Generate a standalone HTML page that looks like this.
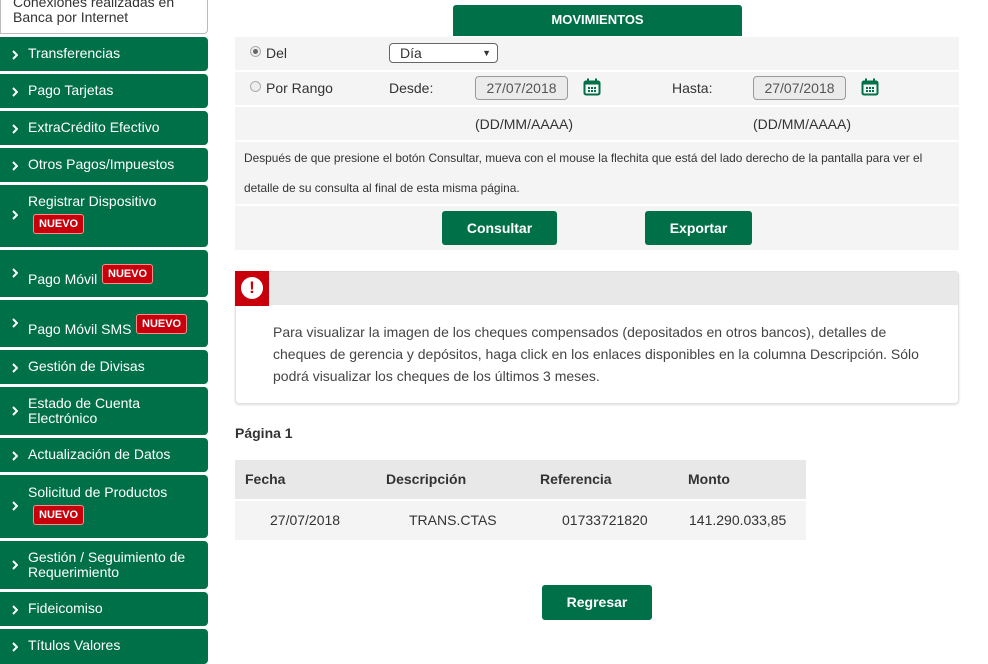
<!DOCTYPE html>
<html><head><meta charset="utf-8"><style>
*{margin:0;padding:0;box-sizing:border-box}
body{width:988px;height:664px;overflow:hidden;background:#fff;font-family:"Liberation Sans",Arial,sans-serif;position:relative;color:#333}
.a{position:absolute}
.nav{position:absolute;left:0;width:208px;background:#007049;color:#fff;border-radius:0 4px 4px 0;font-size:14px}
.nav .t{position:absolute;left:28px;line-height:15px}
.nav .c{position:absolute;left:12px;width:6px;height:10px}
.badge{display:inline-block;background:#c8000b;color:#fff;font-size:11px;font-weight:bold;padding:3px 5px;border-radius:3px;border:1px solid #ff8a8a;line-height:12px}
.row{position:absolute;left:235px;width:724px;background:#f4f4f4}
.btn{position:absolute;background:#007049;color:#fff;font-weight:bold;font-size:14px;text-align:center;border-radius:3px}
.inp{position:absolute;width:93px;height:24px;border:1px solid #999;border-radius:4px;background:#ebebeb;font-size:14px;color:#555;text-align:center;line-height:22px}
.cal{position:absolute;width:18px;height:18px}
</style></head><body>
<svg width="0" height="0" style="position:absolute"><defs><symbol id="ch" viewBox="0 0 6 10"><polyline points="1,1 5,5 1,9" fill="none" stroke="#fff" stroke-width="2"/></symbol></defs></svg>
<div class="a" style="left:0;top:-4px;width:208px;height:38px;border:1px solid #bbb;border-radius:0 0 4px 0;font-size:14px;line-height:15px;padding:0 0 0 12px;color:#333"><div style="margin-top:-2px">Conexiones realizadas en</div><div>Banca por Internet</div></div>

<div class="nav" style="top:37px;height:34px"><svg class="c" style="top:13px"><use href="#ch"/></svg><span class="t" style="top:9px">Transferencias</span></div>
<div class="nav" style="top:74px;height:34px"><svg class="c" style="top:13px"><use href="#ch"/></svg><span class="t" style="top:9px">Pago Tarjetas</span></div>
<div class="nav" style="top:111px;height:34px"><svg class="c" style="top:13px"><use href="#ch"/></svg><span class="t" style="top:9px">ExtraCrédito Efectivo</span></div>
<div class="nav" style="top:148px;height:34px"><svg class="c" style="top:13px"><use href="#ch"/></svg><span class="t" style="top:9px">Otros Pagos/Impuestos</span></div>
<div class="nav" style="top:185px;height:62px"><svg class="c" style="top:25px"><use href="#ch"/></svg><span class="t" style="top:9px">Registrar Dispositivo</span><span class="badge a" style="left:33px;top:29px">NUEVO</span></div>
<div class="nav" style="top:250px;height:47px"><svg class="c" style="top:18px"><use href="#ch"/></svg><span class="t" style="top:22px">Pago Móvil</span><span class="badge a" style="left:102px;top:14px">NUEVO</span></div>
<div class="nav" style="top:300px;height:47px"><svg class="c" style="top:18px"><use href="#ch"/></svg><span class="t" style="top:22px">Pago Móvil SMS</span><span class="badge a" style="left:136px;top:14px">NUEVO</span></div>
<div class="nav" style="top:350px;height:34px"><svg class="c" style="top:13px"><use href="#ch"/></svg><span class="t" style="top:9px">Gestión de Divisas</span></div>
<div class="nav" style="top:387px;height:48px"><svg class="c" style="top:19px"><use href="#ch"/></svg><span class="t" style="top:9px">Estado de Cuenta<br>Electrónico</span></div>
<div class="nav" style="top:438px;height:34px"><svg class="c" style="top:13px"><use href="#ch"/></svg><span class="t" style="top:9px">Actualización de Datos</span></div>
<div class="nav" style="top:475px;height:63px"><svg class="c" style="top:26px"><use href="#ch"/></svg><span class="t" style="top:10px">Solicitud de Productos</span><span class="badge a" style="left:33px;top:30px">NUEVO</span></div>
<div class="nav" style="top:541px;height:48px"><svg class="c" style="top:19px"><use href="#ch"/></svg><span class="t" style="top:9px">Gestión / Seguimiento de<br>Requerimiento</span></div>
<div class="nav" style="top:592px;height:34px"><svg class="c" style="top:13px"><use href="#ch"/></svg><span class="t" style="top:9px">Fideicomiso</span></div>
<div class="nav" style="top:629px;height:35px"><svg class="c" style="top:13px"><use href="#ch"/></svg><span class="t" style="top:9px">Títulos Valores</span></div>

<div class="a" style="left:453px;top:5px;width:289px;height:31px;background:#007049;color:#fff;font-weight:bold;font-size:13px;text-align:center;line-height:29px;border-radius:3px 3px 0 0">MOVIMIENTOS</div>

<div class="row" style="top:37px;height:33px"></div>
<div class="row" style="top:72px;height:33px"></div>
<div class="row" style="top:107px;height:33px"></div>
<div class="row" style="top:142px;height:62px"></div>
<div class="row" style="top:206px;height:44px"></div>

<div class="a" style="left:250px;top:46px;width:11px;height:11px;border-radius:50%;border:1px solid #aaa;background:#eee"><div style="margin:2px;width:5px;height:5px;border-radius:50%;background:#666"></div></div>
<div class="a" style="left:266px;top:45px;font-size:14px">Del</div>
<div class="a" style="left:389px;top:43px;width:109px;height:20px;border:1px solid #666;border-radius:4px;background:#fff;font-size:14px;padding-left:10px;line-height:18px">Día<span style="position:absolute;right:6px;font-size:9px">▼</span></div>

<div class="a" style="left:250px;top:81px;width:11px;height:11px;border-radius:50%;border:1px solid #aaa;background:#eee"></div>
<div class="a" style="left:266px;top:80px;font-size:14px">Por Rango</div>
<div class="a" style="left:389px;top:80px;font-size:14px">Desde:</div>
<div class="inp" style="left:475px;top:76px">27/07/2018</div>
<svg class="cal" style="left:583px;top:78px" viewBox="0 0 18 18"><rect x="1.5" y="3.5" width="15" height="13" rx="1.5" fill="none" stroke="#007049" stroke-width="2"/><rect x="1.5" y="3.5" width="15" height="3" fill="#007049"/><rect x="4" y="0.5" width="2" height="4" fill="#007049"/><rect x="12" y="0.5" width="2" height="4" fill="#007049"/><g fill="#007049"><rect x="5" y="9" width="2" height="2"/><rect x="8" y="9" width="2" height="2"/><rect x="11" y="9" width="2" height="2"/><rect x="5" y="12" width="2" height="2"/><rect x="8" y="12" width="2" height="2"/><rect x="11" y="12" width="2" height="2"/></g></svg>
<div class="a" style="left:672px;top:80px;font-size:14px">Hasta:</div>
<div class="inp" style="left:753px;top:76px">27/07/2018</div>
<svg class="cal" style="left:861px;top:78px" viewBox="0 0 18 18"><rect x="1.5" y="3.5" width="15" height="13" rx="1.5" fill="none" stroke="#007049" stroke-width="2"/><rect x="1.5" y="3.5" width="15" height="3" fill="#007049"/><rect x="4" y="0.5" width="2" height="4" fill="#007049"/><rect x="12" y="0.5" width="2" height="4" fill="#007049"/><g fill="#007049"><rect x="5" y="9" width="2" height="2"/><rect x="8" y="9" width="2" height="2"/><rect x="11" y="9" width="2" height="2"/><rect x="5" y="12" width="2" height="2"/><rect x="8" y="12" width="2" height="2"/><rect x="11" y="12" width="2" height="2"/></g></svg>

<div class="a" style="left:475px;top:116px;font-size:14px">(DD/MM/AAAA)</div>
<div class="a" style="left:753px;top:116px;font-size:14px">(DD/MM/AAAA)</div>

<div class="a" style="left:244px;top:143px;font-size:11.9px;line-height:30px;width:710px;color:#333">Después de que presione el botón Consultar, mueva con el mouse la flechita que está del lado derecho de la pantalla para ver el<br>detalle de su consulta al final de esta misma página.</div>

<div class="btn" style="left:442px;top:211px;width:115px;height:34px;line-height:34px">Consultar</div>
<div class="btn" style="left:645px;top:211px;width:107px;height:34px;line-height:34px">Exportar</div>

<div class="a" style="left:235px;top:271px;width:724px;height:133px;border:1px solid #e2e2e2;border-radius:4px;background:#fff;box-shadow:0 1px 2px #ddd"></div>
<div class="a" style="left:236px;top:272px;width:722px;height:33px;background:#e8e8e8"></div>
<div class="a" style="left:235px;top:271px;width:34px;height:35px;background:#c8000b"><div style="position:absolute;left:6px;top:6px;width:22px;height:22px;border-radius:50%;background:#fff;color:#c8000b;font-weight:bold;font-size:17px;text-align:center;line-height:22px">!</div></div>
<div class="a" style="left:273px;top:321px;font-size:14px;line-height:22px;width:660px;color:#444">Para visualizar la imagen de los cheques compensados (depositados en otros bancos), detalles de cheques de gerencia y depósitos, haga click en los enlaces disponibles en la columna Descripción. Sólo podrá visualizar los cheques de los últimos 3 meses.</div>

<div class="a" style="left:235px;top:425px;font-size:14px;font-weight:bold">Página 1</div>

<div class="a" style="left:235px;top:460px;width:571px;height:39px;background:#e8e8e8"></div>
<div class="a" style="left:235px;top:501px;width:571px;height:39px;background:#f4f4f4"></div>
<div class="a" style="left:245px;top:471px;font-size:14px;font-weight:bold">Fecha</div>
<div class="a" style="left:386px;top:471px;font-size:14px;font-weight:bold">Descripción</div>
<div class="a" style="left:540px;top:471px;font-size:14px;font-weight:bold">Referencia</div>
<div class="a" style="left:688px;top:471px;font-size:14px;font-weight:bold">Monto</div>
<div class="a" style="left:270px;top:512px;font-size:14px">27/07/2018</div>
<div class="a" style="left:409px;top:512px;font-size:14px">TRANS.CTAS</div>
<div class="a" style="left:562px;top:512px;font-size:14px">01733721820</div>
<div class="a" style="left:689px;top:512px;font-size:14px">141.290.033,85</div>

<div class="btn" style="left:542px;top:585px;width:110px;height:35px;line-height:35px">Regresar</div>
</body></html>
